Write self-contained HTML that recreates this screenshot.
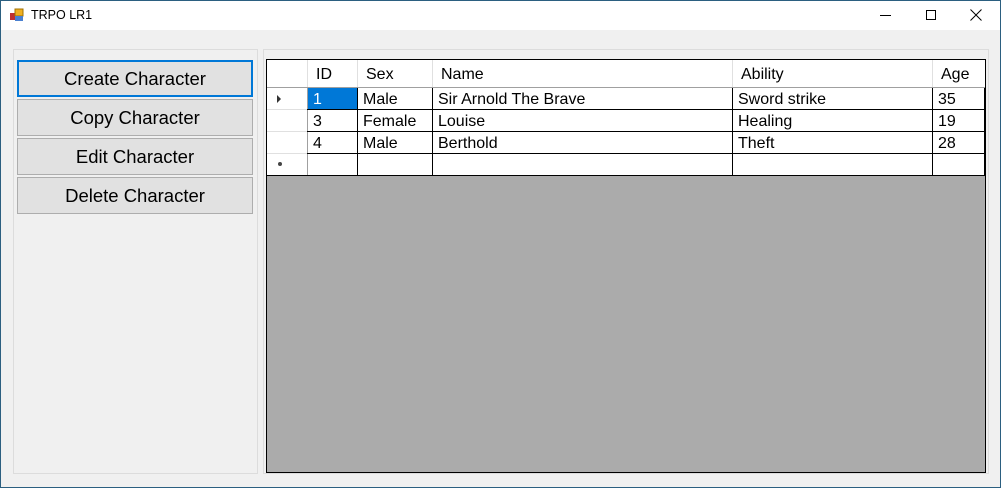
<!DOCTYPE html>
<html><head><style>
*{margin:0;padding:0;box-sizing:border-box}
body{width:1001px;height:488px;overflow:hidden;font-family:"Liberation Sans",sans-serif;background:#f0f0f0;position:relative}
.frame{position:absolute;left:0;top:0;width:1001px;height:488px;border:1px solid #2b5f80}
.title{position:absolute;left:1px;top:1px;width:999px;height:29px;background:#fff}
.a{position:absolute}
.btn{position:absolute;left:17px;width:236px;height:37px;background:#e1e1e1;border:1px solid #adadad;font-size:18.5px;text-align:center;line-height:35px;color:#000}
.cell{position:absolute;font-size:16px;line-height:21px;padding-left:5px;color:#000;white-space:nowrap}
</style></head><body>
<div class="frame"></div>
<div class="title"></div>
<svg class="a" style="left:9px;top:8px" width="16" height="15">
<rect x="1" y="5" width="5" height="7" fill="#c03030"/><rect x="6" y="1" width="8" height="7" fill="#f0b020" stroke="#a07000" stroke-width="1"/><rect x="6" y="8" width="8" height="5" fill="#4a80d0"/></svg>
<div class="a" style="left:31px;top:8px;font-size:12.5px">TRPO LR1</div>
<div class="a" style="left:880px;top:15px;width:11px;height:1px;background:#000"></div>
<div class="a" style="left:926px;top:10px;width:10px;height:10px;border:1px solid #000"></div>
<svg class="a" style="left:970px;top:9px" width="12" height="12"><path d="M0.5 0.5L11.5 11.5M11.5 0.5L0.5 11.5" stroke="#000" stroke-width="1"/></svg>

<div class="a" style="left:13px;top:49px;width:245px;height:425px;border:1px solid #dcdcdc"></div>
<div class="a" style="left:263px;top:49px;width:726px;height:425px;border:1px solid #dcdcdc"></div>

<div class="btn" style="top:60px;border:2px solid #0078d7;line-height:33px">Create Character</div>
<div class="btn" style="top:99px">Copy Character</div>
<div class="btn" style="top:138px">Edit Character</div>
<div class="btn" style="top:177px">Delete Character</div>

<div class="a" style="left:266px;top:59px;width:720px;height:414px;background:#ababab;border:1px solid #000"></div>
<div class="a" style="left:267px;top:60px;width:718px;height:116px;background:#fff"></div>
<svg class="a" style="left:267px;top:60px" width="718" height="116">
<g stroke="#e0e0e0" stroke-width="1">
<line x1="40.5" y1="0" x2="40.5" y2="27"/><line x1="90.5" y1="0" x2="90.5" y2="27"/><line x1="165.5" y1="0" x2="165.5" y2="27"/><line x1="465.5" y1="0" x2="465.5" y2="27"/><line x1="665.5" y1="0" x2="665.5" y2="27"/>
<line x1="0" y1="49.5" x2="40" y2="49.5"/><line x1="0" y1="71.5" x2="40" y2="71.5"/><line x1="0" y1="93.5" x2="40" y2="93.5"/>
</g>
<line x1="0" y1="27.5" x2="40" y2="27.5" stroke="#a0a0a0"/>
<line x1="40.5" y1="27" x2="40.5" y2="116" stroke="#a0a0a0"/>
<line x1="40" y1="27.5" x2="718" y2="27.5" stroke="#a0a0a0"/>
<g stroke="#000" stroke-width="1">
<line x1="40" y1="49.5" x2="718" y2="49.5"/><line x1="40" y1="71.5" x2="718" y2="71.5"/><line x1="40" y1="93.5" x2="718" y2="93.5"/><line x1="0" y1="115.5" x2="718" y2="115.5"/>
<line x1="90.5" y1="28" x2="90.5" y2="116"/><line x1="165.5" y1="28" x2="165.5" y2="116"/><line x1="465.5" y1="28" x2="465.5" y2="116"/><line x1="665.5" y1="28" x2="665.5" y2="116"/><line x1="717.5" y1="28" x2="717.5" y2="116"/>
</g>
<rect x="41" y="28" width="49" height="21" fill="#0078d7"/>
<path d="M10 35L14 39L10 43Z" fill="#333"/>
<circle cx="13" cy="104" r="2" fill="#444"/>
</svg>
<div class="cell" style="left:311px;top:64px">ID</div>
<div class="cell" style="left:361px;top:64px">Sex</div>
<div class="cell" style="left:436px;top:64px">Name</div>
<div class="cell" style="left:736px;top:64px">Ability</div>
<div class="cell" style="left:936px;top:64px">Age</div>

<div class="cell" style="left:308px;top:89px;color:#fff">1</div>
<div class="cell" style="left:358px;top:89px">Male</div>
<div class="cell" style="left:433px;top:89px">Sir Arnold The Brave</div>
<div class="cell" style="left:733px;top:89px">Sword strike</div>
<div class="cell" style="left:933px;top:89px">35</div>

<div class="cell" style="left:308px;top:111px">3</div>
<div class="cell" style="left:358px;top:111px">Female</div>
<div class="cell" style="left:433px;top:111px">Louise</div>
<div class="cell" style="left:733px;top:111px">Healing</div>
<div class="cell" style="left:933px;top:111px">19</div>

<div class="cell" style="left:308px;top:133px">4</div>
<div class="cell" style="left:358px;top:133px">Male</div>
<div class="cell" style="left:433px;top:133px">Berthold</div>
<div class="cell" style="left:733px;top:133px">Theft</div>
<div class="cell" style="left:933px;top:133px">28</div>
</body></html>
